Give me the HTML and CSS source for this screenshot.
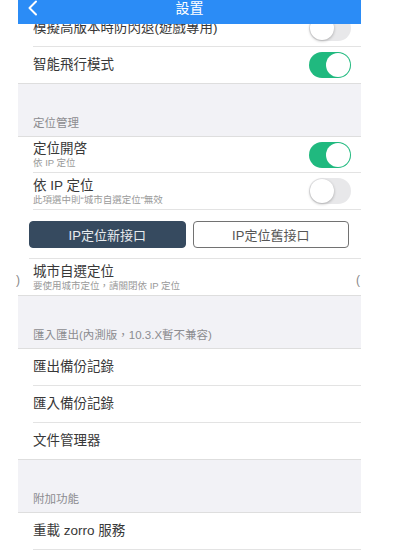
FILE: index.html
```html
<!DOCTYPE html>
<html lang="zh-Hant">
<head>
  <meta charset="UTF-8" />
  <meta name="viewport" content="width=device-width, initial-scale=1.0" />
  <title>設置</title>
  <link rel="stylesheet" href="styles.css">
</head>
<body>
  <div class="page">
    <div class="screen">
      <div class="nav">
        <svg class="back" width="12" height="16" viewBox="0 0 12 16">
          <path d="M9 1.5 L2.5 8 L9 14.5" fill="none" stroke="#fff" stroke-width="2" stroke-linecap="round" stroke-linejoin="round"/>
        </svg>
        <h1>設置</h1>
      </div>

      <div class="list">
        <div class="group first">
          <div class="cell">
            <div class="cell-inner">
              <div class="label"><span class="title">模擬高版本時防閃退(遊戲專用)</span></div>
              <span class="switch"></span>
            </div>
          </div>
          <div class="cell">
            <div class="cell-inner">
              <div class="label"><span class="title">智能飛行模式</span></div>
              <span class="switch on"></span>
            </div>
          </div>
        </div>

        <div class="section-head">定位管理</div>
        <div class="group">
          <div class="cell">
            <div class="cell-inner short">
              <div class="label">
                <span class="title">定位開啓</span>
                <span class="sub">依 IP 定位</span>
              </div>
              <span class="switch on"></span>
            </div>
          </div>
          <div class="cell">
            <div class="cell-inner">
              <div class="label">
                <span class="title">依 IP 定位</span>
                <span class="sub">此項選中則“城市自選定位”無效</span>
              </div>
              <span class="switch"></span>
            </div>
          </div>
          <div class="cell">
            <div class="cell-inner btn-row">
              <button class="seg active">IP定位新接口</button>
              <button class="seg">IP定位舊接口</button>
            </div>
          </div>
          <div class="cell">
            <div class="cell-inner">
              <div class="label">
                <span class="title">城市自選定位</span>
                <span class="sub">要使用城市定位，請關閉依 IP 定位</span>
              </div>
            </div>
          </div>
        </div>

        <div class="section-head">匯入匯出(內測版，10.3.X暫不兼容)</div>
        <div class="group">
          <div class="cell"><div class="cell-inner"><span class="title">匯出備份記錄</span></div></div>
          <div class="cell"><div class="cell-inner"><span class="title">匯入備份記錄</span></div></div>
          <div class="cell"><div class="cell-inner"><span class="title">文件管理器</span></div></div>
        </div>

        <div class="section-head">附加功能</div>
        <div class="group">
          <div class="cell"><div class="cell-inner"><span class="title">重載 zorro 服務</span></div></div>
          <div class="cell"><div class="cell-inner"></div></div>
        </div>
      </div>
    </div>

    <span class="edge left">)</span>
    <span class="edge right">(</span>
  </div>
</body>
</html>
```

FILE: styles.css
```css
body {
  margin: 0;
  background: #fff;
  font-family: "Helvetica Neue", "Liberation Sans", "Noto Sans CJK TC", sans-serif;
  color: #333;
}

.page {
  position: relative;
  width: 404px;
  height: 559px;
  overflow: hidden;
}

.screen {
  position: relative;
  width: 343px;
  height: 559px;
  margin-left: 18px;
  background: #f2f2f6;
  overflow: hidden;
}

.nav {
  position: absolute;
  top: 0;
  left: 0;
  right: 0;
  height: 24px;
  background: #2b8cf6;
  z-index: 2;
}

.nav h1 {
  margin: 0;
  padding-top: 1px;
  font-size: 14px;
  font-weight: normal;
  line-height: 14px;
  color: #fff;
  text-align: center;
}

.back {
  position: absolute;
  left: 9px;
  top: 0;
}

.list {
  padding-top: 10px;
}

.group {
  background: #fff;
  border-top: 1px solid #dedede;
  border-bottom: 1px solid #dedede;
}

.group.first {
  border-top: none;
}

.cell {
  padding-left: 15px;
}

.cell-inner {
  display: flex;
  align-items: center;
  justify-content: space-between;
  height: 36px;
  padding-right: 10px;
  border-bottom: 1px solid #e3e3e3;
}

.cell:last-child .cell-inner {
  border-bottom: none;
}

.cell-inner.short {
  height: 35px;
}

.label {
  display: flex;
  flex-direction: column;
}

.title {
  font-size: 13.5px;
  line-height: 16px;
  color: #383838;
}

.sub {
  font-size: 9.5px;
  line-height: 11px;
  color: #9a9a9a;
}

.section-head {
  height: 52px;
  box-sizing: border-box;
  padding: 0 15px 6px;
  display: flex;
  align-items: flex-end;
  font-size: 11.5px;
  line-height: 14px;
  color: #8c8c90;
}

.switch {
  position: relative;
  width: 42px;
  height: 26px;
  border-radius: 13px;
  background: #e8e8ea;
  flex-shrink: 0;
}

.switch::after {
  content: "";
  position: absolute;
  top: 1px;
  left: 1px;
  width: 24px;
  height: 24px;
  border-radius: 50%;
  background: #fff;
  box-shadow: 0 1px 3px rgba(0,0,0,0.28);
}

.switch.on {
  background: #20b97f;
}

.switch.on::after {
  left: 17px;
  box-shadow: none;
}

.btn-row {
  height: 48px;
  margin-left: -4px;
  padding-right: 12px;
  gap: 7px;
}

.seg {
  flex: 1;
  height: 27px;
  border: 1px solid #727272;
  border-radius: 4px;
  background: #fff;
  color: #555;
  font-family: "Helvetica Neue", "Liberation Sans", "Noto Sans CJK TC", sans-serif;
  font-size: 13px;
  font-weight: normal;
  padding: 0;
}

.seg.active {
  background: #364a5f;
  border-color: #364a5f;
  color: #e8ecf0;
}

.edge {
  position: absolute;
  top: 273px;
  font-size: 12px;
  color: #888;
  font-family: "Liberation Sans", sans-serif;
}

.edge.left {
  left: 16px;
}

.edge.right {
  left: 356px;
}
```
